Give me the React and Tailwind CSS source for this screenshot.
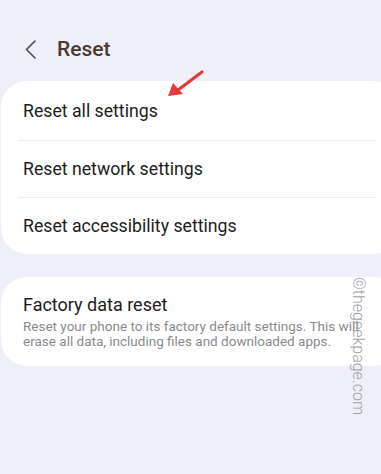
export default function App() {
  return (
    <div className="relative w-[381px] h-[474px] overflow-hidden bg-[#eeeff8] font-['Roboto',sans-serif]">
      <div className="flex items-center h-[30px] mt-[34px] pl-[24px]">
        <svg width="13" height="19" viewBox="0 0 13 19" className="shrink-0">
          <path d="M11 1 L2.5 9.5 L11 18" fill="none" stroke="#4a4a4a" strokeWidth="1.6" strokeLinecap="round" strokeLinejoin="round" />
        </svg>
        <span className="ml-[20px] text-[21px] font-medium text-[#4b3a2f] leading-none">Reset</span>
      </div>

      <div className="mt-[17px] ml-[1px] w-[400px] rounded-[26px] bg-white">
        <div className="h-[59px] flex items-center pl-[22px] pt-[2px] text-[17.7px] text-[#1c1c1c]">Reset all settings</div>
        <div className="ml-[17px] mr-[24px] h-px bg-[#ececf0]" />
        <div className="h-[56px] flex items-center pl-[22px] text-[17.7px] text-[#1c1c1c]">Reset network settings</div>
        <div className="ml-[17px] mr-[24px] h-px bg-[#ececf0]" />
        <div className="h-[56px] flex items-center pl-[22px] text-[17.7px] text-[#1c1c1c]">Reset accessibility settings</div>
      </div>

      <div className="mt-[23px] ml-[1px] w-[400px] rounded-[26px] bg-white pl-[22px] pt-[17px] pb-[17px]">
        <div className="text-[18px] leading-[22px] text-[#1c1c1c]">Factory data reset</div>
        <div className="mt-[3px] w-[350px] text-[13.5px] leading-[15px] text-[#8a8a8e]">
          Reset your phone to its factory default settings. This will erase all data, including files and downloaded apps.
        </div>
      </div>

      <svg className="absolute left-[160px] top-[66px]" width="50" height="36" viewBox="0 0 50 36">
        <line x1="42" y1="6" x2="18" y2="24" stroke="#e8393a" strokeWidth="3.2" strokeLinecap="round" />
        <polygon points="8,30 13,17 23,28" fill="#e8393a" />
      </svg>

      <div className="absolute left-[350px] top-[277px] w-[16px] h-[140px]">
        <div className="absolute left-[16px] top-0 origin-top-left rotate-90 whitespace-nowrap text-[16px] leading-[16px] font-light text-[#a0a0a8]">
          ©thegeekpage.com
        </div>
      </div>
    </div>
  );
}
